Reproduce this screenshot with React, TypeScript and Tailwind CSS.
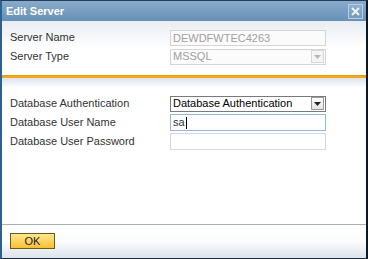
import React from "react";

function Row({ label, children }: { label: string; children: React.ReactNode }) {
  return (
    <div className="flex items-center h-[19px]">
      <div className="w-[160px] text-[11px] text-[#333]">{label}</div>
      {children}
    </div>
  );
}

function Arrow({ disabled }: { disabled?: boolean }) {
  return (
    <div
      className={
        "w-[13px] h-[13px] mr-[1px] flex items-center justify-center border " +
        (disabled ? "border-[#d8d8d8] bg-[#f4f4f4]" : "border-[#9a9a9a] bg-gradient-to-b from-[#ffffff] to-[#e4e4e4]")
      }
    >
      <svg width="7" height="4" viewBox="0 0 7 4">
        <path d="M0 0 L7 0 L3.5 4 Z" fill={disabled ? "#b5b5b5" : "#222"} />
      </svg>
    </div>
  );
}

export default function App() {
  return (
    <div
      className="w-[368px] h-[259px] flex flex-col border-t border-t-[#253e58] border-l-2 border-l-[#2f5f8c] border-r-2 border-r-[#0c1722] border-b border-b-[#1d2b3a] bg-white"
      style={{ fontFamily: '"Liberation Sans", Arial, sans-serif' }}
    >
      <div className="h-[20px] shrink-0 flex items-center justify-between pl-[4px] pr-[3px] bg-gradient-to-b from-[#89abcb] to-[#6890b7]">
        <span className="text-white font-bold text-[11px]">Edit Server</span>
        <div className="w-[15px] h-[15px] flex items-center justify-center bg-gradient-to-b from-[#8fb0cf] to-[#7499bf] border border-[#b9cde0]">
          <svg width="9" height="9" viewBox="0 0 9 9">
            <path d="M1 1 L8 8 M8 1 L1 8" stroke="#eef4fa" strokeWidth="2" />
          </svg>
        </div>
      </div>

      <div className="pt-[7px] px-[8px] pb-[9px] bg-gradient-to-b from-[#e8edf2] via-[#ffffff] to-[#ffffff] flex flex-col">
        <Row label="Server Name">
          <div className="w-[156px] h-[16px] border border-[#d5d5d5] bg-[#fbfbfb] text-[11px] text-[#a0a0a0] pl-[2px] leading-[14px]">
            DEWDFWTEC4263
          </div>
        </Row>
        <Row label="Server Type">
          <div className="w-[156px] h-[16px] border border-[#d5d5d5] bg-[#fbfbfb] flex items-center justify-between">
            <span className="text-[11px] text-[#a0a0a0] pl-[2px]">MSSQL</span>
            <Arrow disabled />
          </div>
        </Row>
      </div>

      <div className="h-[3px] shrink-0 bg-[#f5a517] border-t border-[#e89a10]" />
      <div className="h-[10px] shrink-0 bg-gradient-to-b from-[#dde4ee] to-[#ffffff]" />

      <div className="pt-[6px] px-[8px] flex flex-col flex-1">
        <Row label="Database Authentication">
          <div className="w-[156px] h-[16px] border border-[#7a7a7a] bg-white flex items-center justify-between">
            <span className="text-[11px] text-black pl-[2px]">Database Authentication</span>
            <Arrow />
          </div>
        </Row>
        <Row label="Database User Name">
          <div className="w-[156px] h-[17px] border border-[#8fb8dc] bg-white flex items-center">
            <span className="text-[11px] text-[#333] pl-[2px]">sa</span>
            <span className="w-[1px] h-[12px] bg-black ml-[1px]" />
          </div>
        </Row>
        <Row label="Database User Password">
          <div className="w-[156px] h-[17px] border border-[#d8d8d8] bg-white" />
        </Row>
      </div>

      <div className="h-[1px] shrink-0 bg-[#a7b0b4]" />
      <div className="h-[33px] shrink-0 pt-[8px] pl-[8px] bg-gradient-to-b from-[#ffffff] via-[#fbfcfd] to-[#dde3ec]">
        <button className="w-[45px] h-[16px] border border-[#6b5a1e] bg-gradient-to-b from-[#ffe68a] to-[#f7c12c] text-[11px] text-[#222] leading-[14px] block">
          OK
        </button>
      </div>
    </div>
  );
}
